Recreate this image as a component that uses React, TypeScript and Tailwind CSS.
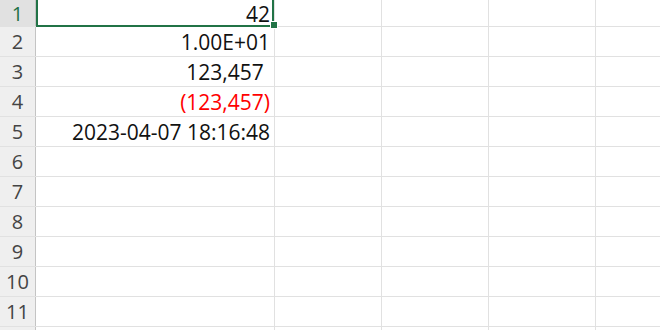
import React from 'react';

type Row = { n: number; a?: React.ReactNode; red?: boolean; label?: boolean };

const rows: Row[] = [
  { n: 1, a: '42' },
  { n: 2, a: '1.00E+01' },
  { n: 3, a: <>123,457<span className="invisible">)</span></> },
  { n: 4, a: '(123,457)', red: true },
  { n: 5, a: '2023-04-07 18:16:48' },
  { n: 6 },
  { n: 7 },
  { n: 8 },
  { n: 9 },
  { n: 10 },
  { n: 11 },
  { n: 12, label: false },
];

export default function App() {
  return (
    <div
      className="relative w-[660px] h-[330px] overflow-hidden bg-white"
      style={{ fontFamily: '"Open Sans", "Noto Sans", sans-serif' }}
    >
      {rows.map((r) => {
        const selected = r.n === 1;
        return (
          <div
            key={r.n}
            className={`flex border-b border-[#e1e1e1] ${selected ? 'h-[27px]' : 'h-[30px]'}`}
          >
            {/* row header */}
            <div
              className={`w-[36px] shrink-0 flex items-center justify-center pt-[1px] border-r border-[#c4c4c4] text-[20px] leading-none ${
                selected ? 'bg-[#e1e1e1] text-[#1e7145]' : 'bg-[#efefef] text-[#444444]'
              }`}
            >
              {r.label === false ? '' : r.n}
            </div>
            {/* column A */}
            <div
              className={`w-[239px] shrink-0 flex items-center justify-end pr-[4px] pt-[2px] border-r border-[#e1e1e1] text-[21px] leading-none ${
                r.red ? 'text-[#ff0000]' : 'text-[#111111]'
              }`}
            >
              {r.a}
            </div>
            <div className="w-[107px] shrink-0 border-r border-[#e1e1e1]" />
            <div className="w-[107px] shrink-0 border-r border-[#e1e1e1]" />
            <div className="w-[107px] shrink-0 border-r border-[#e1e1e1]" />
            <div className="flex-1" />
          </div>
        );
      })}

      {/* active cell selection */}
      <div className="absolute left-[36px] top-[-10px] w-[238px] h-[37px] border-2 border-[#217346] pointer-events-none" />
      {/* fill handle */}
      <div className="absolute left-[270px] top-[21px] w-[8px] h-[8px] bg-[#217346] border border-white" />
    </div>
  );
}
